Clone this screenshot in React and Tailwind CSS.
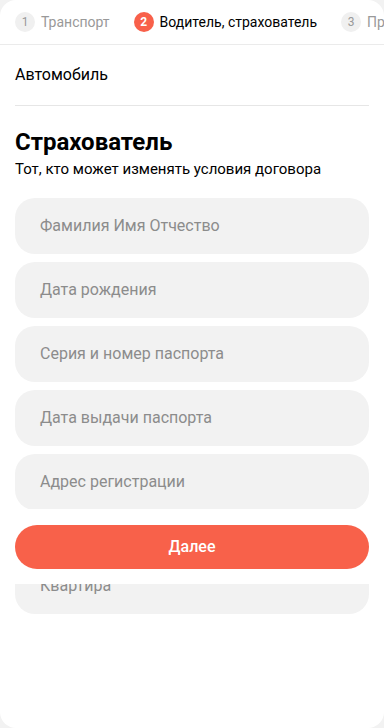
const font = { fontFamily: 'Roboto, "Noto Sans", sans-serif' }

function Step({ num, label, active }) {
  return (
    <div className="flex items-center gap-[6px] shrink-0">
      <span
        className={
          active
            ? 'w-5 h-5 rounded-full bg-[#f8604a] text-white text-[12px] font-bold flex items-center justify-center'
            : 'w-5 h-5 rounded-full bg-[#f0f0f0] text-[#999] text-[12px] flex items-center justify-center'
        }
      >
        {num}
      </span>
      <span className={active ? 'text-[14px] text-black' : 'text-[14px] text-[#999]'}>{label}</span>
    </div>
  )
}

function Field({ label }) {
  return (
    <div className="h-14 rounded-[20px] bg-[#f2f2f2] flex items-center px-[25px] text-[16px] text-[#8c8c8c]">
      {label}
    </div>
  )
}

const fields = [
  'Фамилия Имя Отчество',
  'Дата рождения',
  'Серия и номер паспорта',
  'Дата выдачи паспорта',
  'Адрес регистрации',
]

export default function App() {
  return (
    <div className="w-full h-[728px] bg-[#f2f2f2] overflow-hidden" style={font}>
      <div className="relative h-full bg-white rounded-2xl overflow-hidden">
        <div className="h-[45px] flex items-center gap-6 pl-[15px] border-b border-[#ebebeb] whitespace-nowrap overflow-hidden">
          <Step num="1" label="Транспорт" />
          <Step num="2" label="Водитель, страхователь" active />
          <Step num="3" label="Проверка" />
        </div>

        <div className="px-[15px]">
          <div className="pt-5 pb-5 text-[16px] leading-5 text-black border-b border-[#e6e6e6]">Автомобиль</div>

          <h2 className="mt-[22px] text-[24px] leading-7 font-bold text-black">Страхователь</h2>
          <p className="mt-1 text-[15px] leading-[18px] text-black">Тот, кто может изменять условия договора</p>

          <div className="mt-5 flex flex-col gap-2">
            {fields.map((f) => (
              <Field key={f} label={f} />
            ))}
          </div>
          <div className="mt-12">
            <Field label="Квартира" />
          </div>
        </div>

        <div className="absolute left-0 right-0 top-[509px] h-[75px] bg-white px-[15px] pt-4">
          <button className="w-full h-11 rounded-[22px] bg-[#f8614a] text-white text-[16px] font-medium">
            Далее
          </button>
        </div>
      </div>
    </div>
  )
}
